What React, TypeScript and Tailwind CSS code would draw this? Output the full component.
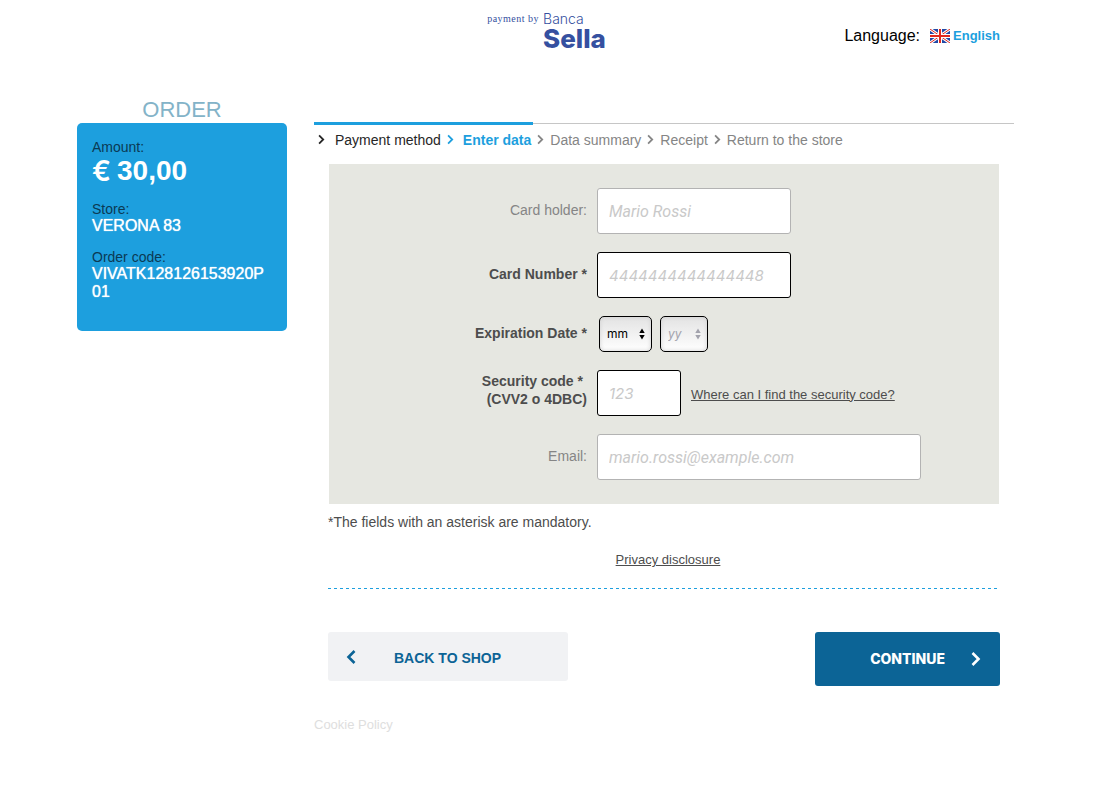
import type { InputHTMLAttributes, ReactNode } from 'react';

const STEPS = [
  { label: 'Payment method', state: 'done' },
  { label: 'Enter data', state: 'current' },
  { label: 'Data summary', state: 'todo' },
  { label: 'Receipt', state: 'todo' },
  { label: 'Return to the store', state: 'todo' },
];

const STEP_STYLE: Record<string, string> = {
  done: 'gap-2.5 text-[#262626]',
  current: 'gap-[9px] font-bold text-[#1d9fde]',
  todo: 'gap-1.5 text-[#858585]',
};

function Chevron({ className }: { className: string }) {
  return (
    <svg viewBox="0 0 10 16" className={className} fill="none" stroke="currentColor" strokeWidth="2.6" aria-hidden="true">
      <path d="M1.5 2 L7.5 8 L1.5 14" />
    </svg>
  );
}

function Flag() {
  return (
    <svg viewBox="0 0 20 14" className="h-3.5 w-5" aria-hidden="true">
      <rect width="20" height="14" fill="#2148a5" />
      <path d="M0 0 L20 14 M20 0 L0 14" stroke="#fff" strokeWidth="3" />
      <path d="M0 0 L20 14 M20 0 L0 14" stroke="#e0281e" strokeWidth="1" />
      <path d="M10 0 V14 M0 7 H20" stroke="#fff" strokeWidth="4" />
      <path d="M10 0 V14 M0 7 H20" stroke="#e0281e" strokeWidth="2" />
    </svg>
  );
}

function Row({ label, htmlFor, required, children }: { label: ReactNode; htmlFor: string; required?: boolean; children: ReactNode }) {
  return (
    <div className="flex items-center gap-2.5">
      <label
        htmlFor={htmlFor}
        className={`w-[258px] shrink-0 pb-0.5 text-right text-sm leading-[18px] ${required ? 'font-bold text-[#4d4d4d]' : 'text-[#858585]'}`}
      >
        {label}
      </label>
      {children}
    </div>
  );
}

function Field({ className, numeric, ...props }: InputHTMLAttributes<HTMLInputElement> & { numeric?: boolean }) {
  return (
    <input
      {...props}
      inputMode={numeric ? 'numeric' : undefined}
      className={`h-[46px] rounded-[3px] border bg-white px-[11px] placeholder:text-[#c9c9c9] placeholder:italic ${numeric ? "font-['Inter',sans-serif] text-[15px]" : "font-['Roboto',sans-serif] text-base"} ${className}`}
    />
  );
}

function Picker({ id, label, option, className, disabled }: { id: string; label: string; option: string; className: string; disabled?: boolean }) {
  return (
    <div className={`relative h-9 ${disabled ? 'text-[#a3a3ad]' : 'text-black'} ${className}`}>
      <select
        id={id}
        aria-label={label}
        disabled={disabled}
        className={`h-9 w-full appearance-none rounded-[5px] border border-black bg-linear-to-b from-[#e3e3e3] to-white px-[7px] font-['Inter',sans-serif] text-[12px] shadow-[inset_0_0_4px_#cfcfcf] ${disabled ? 'italic' : ''}`}
      >
        <option>{option}</option>
      </select>
      <svg viewBox="0 0 6 12" className="pointer-events-none absolute top-3 right-[7px] h-3 w-1.5" fill="currentColor" aria-hidden="true">
        <path d="M3 0.5 L5.7 5 H0.3 Z M0.3 7 H5.7 L3 11.5 Z" />
      </svg>
    </div>
  );
}

export default function App() {
  return (
    <div className="mx-auto max-w-[942px] bg-white pr-[5px] font-['Liberation_Sans',Arial,sans-serif] text-sm">
      <header className="grid h-[97px] grid-cols-[1fr_auto_1fr] items-start pr-3.5">
        <div className="col-start-2 flex items-start gap-1 pt-3 pl-4 text-[#3550a0]">
          <span className="font-['Liberation_Serif',serif] text-[10px] leading-[14px] tracking-wider">payment by</span>
          <span className="flex flex-col font-['Inter',sans-serif]">
            <span className="text-[14px] leading-[14px] font-light">Banca</span>
            <span className="text-[26px] leading-[26px] font-extrabold">Sella</span>
          </span>
        </div>
        <div className="flex items-center justify-end gap-2.5 pt-6">
          <span className="text-base text-black">Language:</span>
          <a href="#language" className="flex items-center gap-[3px] text-[13px] font-bold text-[#1d9fde]">
            <Flag />
            English
          </a>
        </div>
      </header>

      <div className="flex items-start gap-[27px]">
        <aside className="w-[210px] shrink-0">
          <h2 className="text-center text-[22px] leading-[26px] text-[#83b3c8]">ORDER</h2>
          <dl className="min-h-52 rounded-[5px] bg-[#1d9fde] px-[15px] pt-4 text-base leading-[18px] text-white">
            <dt className="text-sm leading-4 text-[#0b3a54]">Amount:</dt>
            <dd className="flex gap-1.5 text-[28px] leading-8 font-bold">
              <span className="font-['Inter',sans-serif] font-semibold">€</span>
              <span>30,00</span>
            </dd>
            <dt className="mt-3.5 text-sm leading-4 text-[#0b3a54]">Store:</dt>
            <dd className="[text-shadow:0_0_1px_#fff]">VERONA 83</dd>
            <dt className="mt-3.5 text-sm leading-4 text-[#0b3a54]">Order code:</dt>
            <dd className="break-all [text-shadow:0_0_1px_#fff]">VIVATK128126153920P01</dd>
          </dl>
        </aside>

        <main className="min-w-0 flex-1 pt-[25px]">
          <div className="flex items-center">
            <div className="h-[3px] w-[219px] bg-[#1d9fde]" />
            <div className="h-px flex-1 bg-[#c6c6c6]" />
          </div>
          <ol className="flex h-[39px] items-start gap-1.5 pt-1.5 pl-1 leading-[18px]">
            {STEPS.map((step) => (
              <li key={step.label} className={`flex items-center whitespace-nowrap ${STEP_STYLE[step.state]}`}>
                <Chevron className="mb-0.5 h-[11px] w-[7px]" />
                {step.label}
              </li>
            ))}
          </ol>

          <form className="px-3.5" onSubmit={(e) => e.preventDefault()}>
            <div className="mx-px flex flex-col gap-[18px] bg-[#e6e7e1] py-6">
              <Row label="Card holder:" htmlFor="holder">
                <Field id="holder" placeholder="Mario Rossi" className="w-[194px] border-[#b3b3b3]" />
              </Row>
              <Row label="Card Number *" htmlFor="number" required>
                <Field id="number" numeric placeholder="4444444444444448" className="w-[194px] border-black" />
              </Row>
              <Row label="Expiration Date *" htmlFor="month" required>
                <div className="flex gap-2 pl-0.5">
                  <Picker id="month" label="Expiration month" option="mm" className="w-[53px]" />
                  <Picker id="year" label="Expiration year" option="yy" className="w-12" disabled />
                </div>
              </Row>
              <Row
                label={
                  <>
                    <span className="block pr-1">Security code *</span>
                    <span className="block pb-1">(CVV2 o 4DBC)</span>
                  </>
                }
                htmlFor="cvv"
                required
              >
                <Field id="cvv" numeric placeholder="123" className="w-[84px] border-black" />
                <a href="#security-code" className="pt-1 text-[13px] text-[#4d4d4d] underline">
                  Where can I find the security code?
                </a>
              </Row>
              <Row label="Email:" htmlFor="email">
                <Field id="email" type="email" placeholder="mario.rossi@example.com" className="w-[324px] border-[#b3b3b3]" />
              </Row>
            </div>

            <p className="mt-[9px] leading-[18px] text-[#4d4d4d]">*The fields with an asterisk are mandatory.</p>
            <p className="mt-5 pl-2 text-center text-[13px] leading-[18px] text-[#4d4d4d]">
              <a href="#privacy" className="underline">
                Privacy disclosure
              </a>
            </p>
            <div className="mt-[19px] h-px bg-[repeating-linear-gradient(90deg,#1d9fde_0_3px,transparent_3px_6px)]" />

            <div className="mt-[43px] flex items-start justify-between font-bold">
              <button type="button" className="flex h-[49px] w-60 items-center rounded-[3px] bg-[#f1f2f4] pt-0.5 pl-[18px] text-[#0c6496]">
                <Chevron className="mb-0.5 h-4 w-2.5 rotate-180" />
                <span className="pl-[38px]">BACK TO SHOP</span>
              </button>
              <button type="submit" className="flex h-[54px] w-[185px] items-center justify-end gap-[26px] rounded-[3px] bg-[#0c6496] pr-[19px] text-white">
                <span className="font-['Inter',sans-serif] text-[14px] font-extrabold">CONTINUE</span>
                <Chevron className="h-4 w-2.5" />
              </button>
            </div>
          </form>

          <footer className="mt-[30px] pb-16 text-[13px] leading-[18px]">
            <a href="#cookies" className="text-[#dedede]">
              Cookie Policy
            </a>
          </footer>
        </main>
      </div>
    </div>
  );
}
